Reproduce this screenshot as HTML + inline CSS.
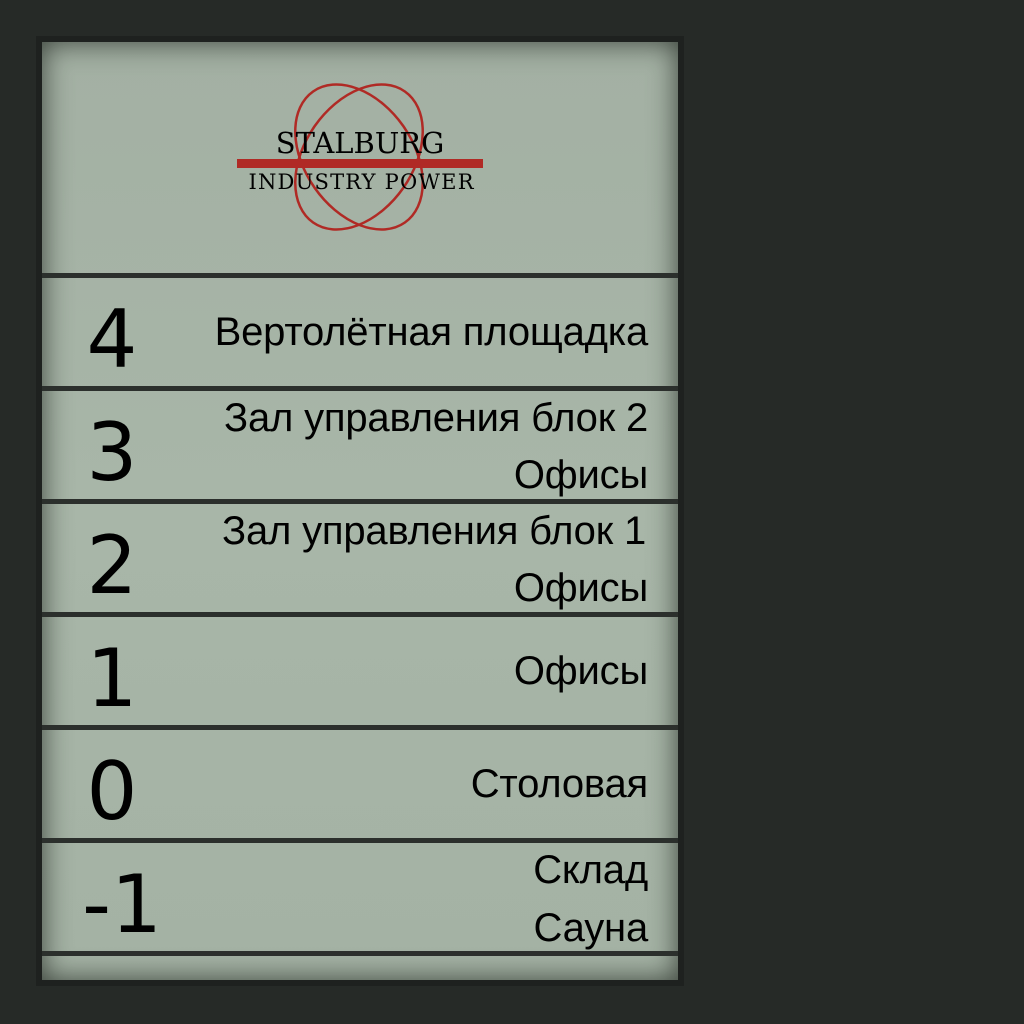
<!DOCTYPE html>
<html><head><meta charset="utf-8"><style>
html,body{margin:0;padding:0;background:#262a27;width:1024px;height:1024px;overflow:hidden}
.frame{position:absolute;left:36px;top:36px;width:648px;height:950px;background:#1e211f}
.panel{position:absolute;left:42px;top:42px;width:636px;height:938px;background:linear-gradient(180deg,#a3b0a3,#a8b6a8 50%,#a4b2a4);box-shadow:inset 0 0 28px rgba(20,25,20,.75);overflow:hidden}
.sep{position:absolute;left:0;width:636px;height:5px;background:#2b2f2c}
.num{position:absolute;width:150px;left:-5px;text-align:center;font:80px "DejaVu Sans","Liberation Sans",sans-serif;color:#000;line-height:1}
.t{position:absolute;right:30px;font:40px "Liberation Sans",sans-serif;letter-spacing:-0.2px;color:#000;white-space:nowrap;line-height:1}
</style></head><body>
<div class="frame"></div>
<div class="panel">
<svg style="position:absolute;left:0;top:0" width="636" height="240">
<g fill="none" stroke="#b02a25" stroke-width="2.5">
<ellipse cx="317" cy="115" rx="80" ry="54" transform="rotate(55 317 115)"/>
<ellipse cx="317" cy="115" rx="80" ry="54" transform="rotate(-55 317 115)"/>
</g>
<rect x="195" y="117" width="246" height="9" fill="#b02a25"/>
<text x="318" y="111" text-anchor="middle" font-family="DejaVu Serif,serif" font-size="29" fill="#000">STALBURG</text>
<text x="319" y="147" text-anchor="middle" font-family="DejaVu Serif,serif" font-size="21" fill="#000" textLength="225">INDUSTRY POWER</text>
</svg>
<div class="sep" style="top:231px"></div>
<div class="sep" style="top:344px"></div>
<div class="sep" style="top:457px"></div>
<div class="sep" style="top:570px"></div>
<div class="sep" style="top:683px"></div>
<div class="sep" style="top:796px"></div>
<div class="sep" style="top:909px"></div>

<div class="num" style="top:258px">4</div>
<div class="t" style="top:270px">Вертолётная площадка</div>

<div class="num" style="top:371px">3</div>
<div class="t" style="top:356px">Зал управления блок 2</div>
<div class="t" style="top:413px">Офисы</div>

<div class="num" style="top:484px">2</div>
<div class="t" style="top:469px;right:32px">Зал управления блок 1</div>
<div class="t" style="top:526px">Офисы</div>

<div class="num" style="top:597px">1</div>
<div class="t" style="top:609px">Офисы</div>

<div class="num" style="top:710px">0</div>
<div class="t" style="top:722px">Столовая</div>

<div class="num" style="top:823px;left:5px">-1</div>
<div class="t" style="top:808px">Склад</div>
<div class="t" style="top:866px">Сауна</div>
</div>
</body></html>
